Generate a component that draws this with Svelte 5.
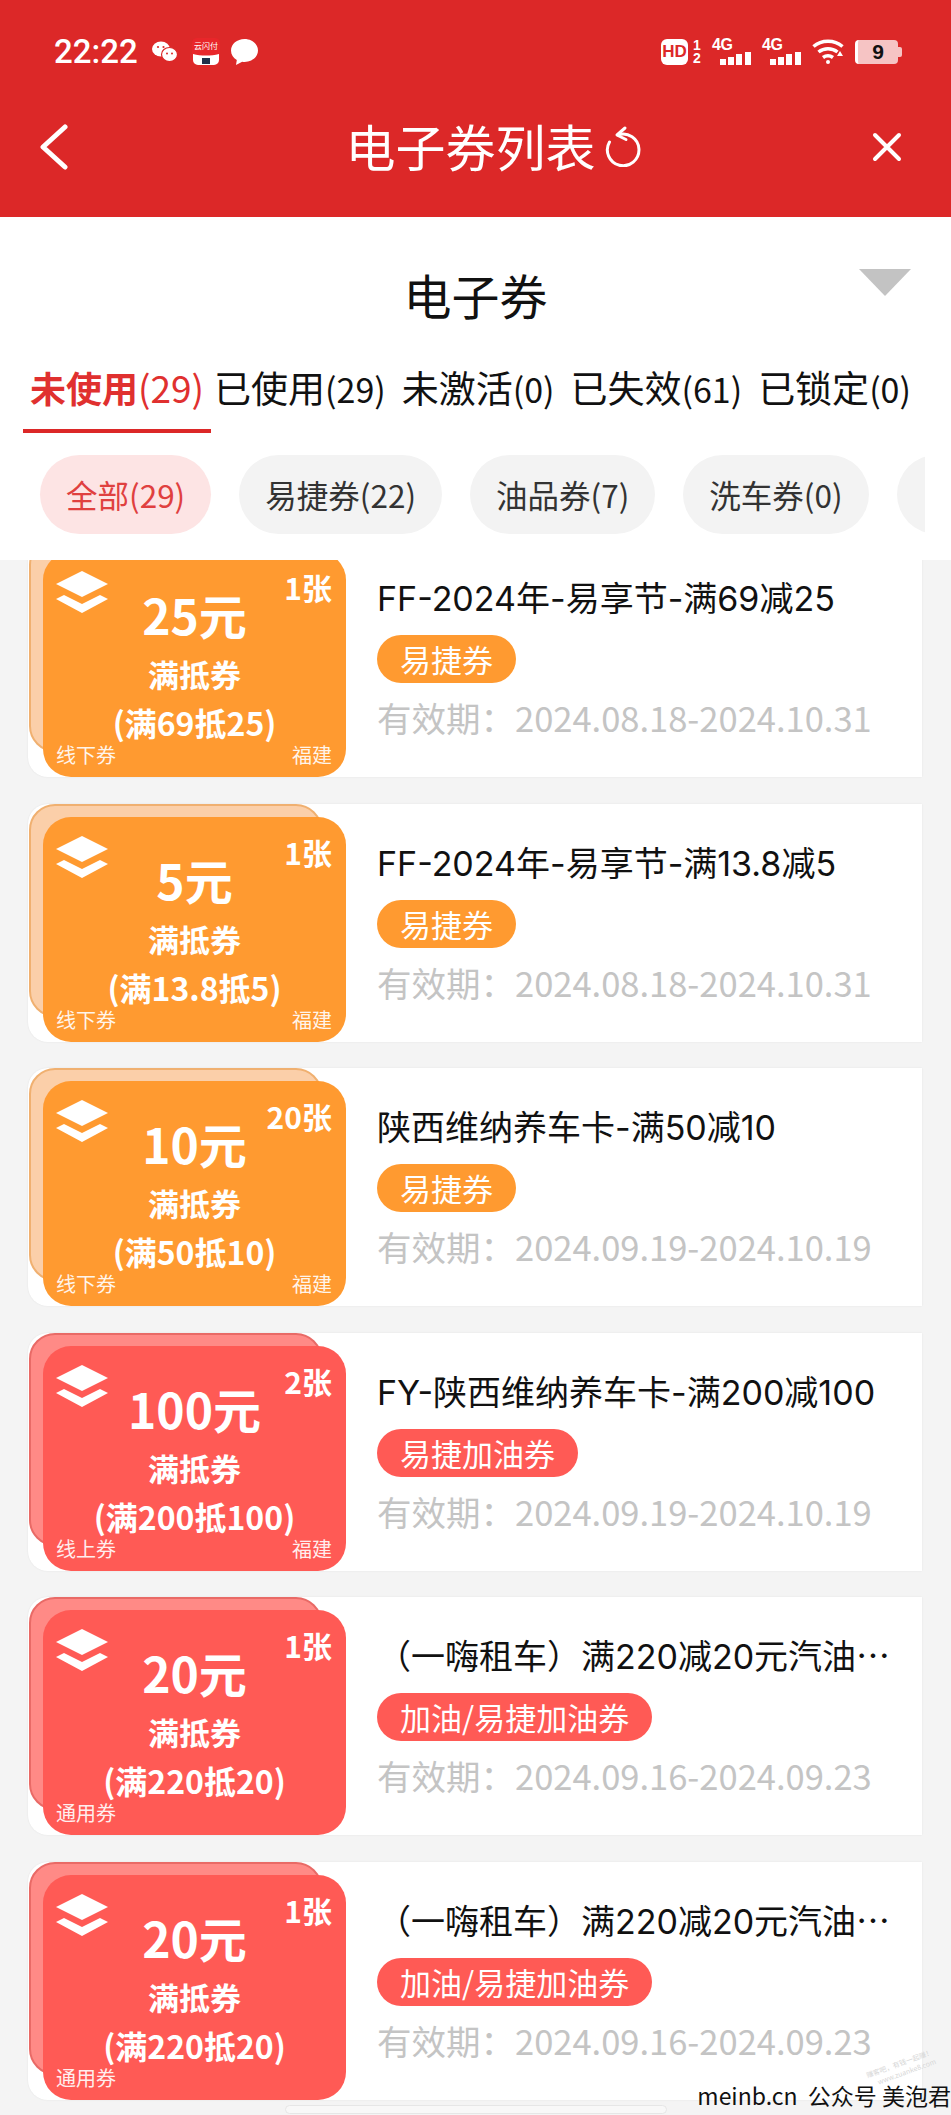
<script lang="ts">
	const tabs = [
		{ name: '未使用', count: 29, active: true },
		{ name: '已使用', count: 29 },
		{ name: '未激活', count: 0 },
		{ name: '已失效', count: 61 },
		{ name: '已锁定', count: 0 }
	];

	const chips = ['全部(29)', '易捷券(22)', '油品券(7)', '洗车券(0)', ''];

	const coupons = [
		{ tone: 'orange', amount: 25, qty: '1张', rule: '满69抵25', channel: '线下券', region: '福建', title: 'FF-2024年-易享节-满69减25', tag: '易捷券', date: '2024.08.18-2024.10.31' },
		{ tone: 'orange', amount: 5, qty: '1张', rule: '满13.8抵5', channel: '线下券', region: '福建', title: 'FF-2024年-易享节-满13.8减5', tag: '易捷券', date: '2024.08.18-2024.10.31' },
		{ tone: 'orange', amount: 10, qty: '20张', rule: '满50抵10', channel: '线下券', region: '福建', title: '陕西维纳养车卡-满50减10', tag: '易捷券', date: '2024.09.19-2024.10.19' },
		{ tone: 'red', amount: 100, qty: '2张', rule: '满200抵100', channel: '线上券', region: '福建', title: 'FY-陕西维纳养车卡-满200减100', tag: '易捷加油券', date: '2024.09.19-2024.10.19' },
		{ tone: 'red', amount: 20, qty: '1张', rule: '满220抵20', channel: '通用券', region: '', title: '（一嗨租车）满220减20元汽油⋯', tag: '加油/易捷加油券', date: '2024.09.16-2024.09.23' },
		{ tone: 'red', amount: 20, qty: '1张', rule: '满220抵20', channel: '通用券', region: '', title: '（一嗨租车）满220减20元汽油⋯', tag: '加油/易捷加油券', date: '2024.09.16-2024.09.23' }
	];
</script>

<div class="page">
	<header class="top">
		<div class="status">
			<div class="status-left">
				<span class="time">22:22</span>
				<svg class="ic-wechat" width="26" height="21" viewBox="0 0 26 21" aria-hidden="true">
					<ellipse cx="9" cy="8" rx="9" ry="7.500" fill="#fff" />
					<ellipse cx="17.500" cy="13.500" rx="8" ry="7" fill="#fff" stroke="#dc2828" stroke-width="1.200" />
					<circle cx="6" cy="6" r="1.100" fill="#dc2828" />
					<circle cx="11.500" cy="6" r="1.100" fill="#dc2828" />
					<circle cx="15" cy="12.500" r="1" fill="#dc2828" />
					<circle cx="20" cy="12.500" r="1" fill="#dc2828" />
				</svg>
				<svg class="ic-pay" width="28" height="27" viewBox="0 0 28 27" aria-hidden="true">
					<rect width="28" height="27" rx="5" fill="#e8262a" />
					<text x="14" y="11" text-anchor="middle" font-size="8" fill="#fff">云闪付</text>
					<path d="M1 16c8 2 18 2 26 0v6a5 5 0 0 1-5 5H6a5 5 0 0 1-5-5z" fill="#fff" />
					<rect x="10" y="20" width="8" height="6" fill="#20304a" />
				</svg>
				<svg class="ic-bubble" width="27" height="26" viewBox="0 0 27 26" aria-hidden="true">
					<path d="M13.500 0C6 0 0 5 0 11.500c0 4 2.300 7.400 5.800 9.500L5 26l6.200-3.300c.8.100 1.500.2 2.300.2C21 22.900 27 17.900 27 11.500S21 0 13.500 0z" fill="#fff" />
				</svg>
			</div>
			<div class="status-right">
				<span class="hd">HD</span>
				<span class="sims"><i>1</i><i>2</i></span>
				{#each [0, 1] as sim (sim)}
					<span class="signal">
						<b>4G</b>
						<svg width="31" height="13" viewBox="0 0 31 13" aria-hidden="true">
							<rect x="0" y="7" width="6" height="6" fill="#fff" />
							<rect x="8" y="5" width="6" height="8" fill="#fff" />
							<rect x="16" y="2" width="6" height="11" fill="#fff" />
							<rect x="25" y="0" width="6" height="13" fill="#fff" />
						</svg>
					</span>
				{/each}
				<svg class="ic-wifi" width="32" height="25" viewBox="0 0 32 25" fill="none" stroke="#fff" stroke-width="3.500" aria-hidden="true">
					<path d="M1.500 7.500c8-7 21-7 29 0" />
					<path d="M6.500 13c5.500-4.500 13.500-4.500 19 0" />
					<path d="M11 18.500c3-2.200 7-2.200 10 0" />
					<circle cx="16" cy="23" r="2" fill="#fff" stroke="none" />
					<path d="M25 17h6l-3-5z" fill="#fff" stroke="none" />
				</svg>
				<span class="battery"><span>9</span></span>
			</div>
		</div>
		<div class="navbar">
			<svg class="back" width="34" height="46" viewBox="0 0 34 46" fill="none" stroke="#fff" stroke-width="5" stroke-linecap="round" stroke-linejoin="round" aria-label="返回">
				<path d="M28 3 6 23l22 20" />
			</svg>
			<div class="nav-title">
				<span>电子券列表</span>
				<svg width="38" height="42" viewBox="0 0 38 42" fill="none" stroke="#fff" stroke-width="3" stroke-linecap="round" stroke-linejoin="round" aria-hidden="true">
					<path d="M14 10A15.800 15.800 0 1 1 5.500 17" />
					<path d="M21 3l-8 7 9 4.500" />
				</svg>
			</div>
			<svg class="close" width="30" height="30" viewBox="0 0 30 30" stroke="#fff" stroke-width="4" stroke-linecap="round" aria-label="关闭">
				<path d="M3 3l24 24M27 3 3 27" />
			</svg>
		</div>
	</header>

	<section class="filters">
		<div class="heading">
			<h1>电子券</h1>
			<span class="caret"></span>
		</div>
		<nav class="tabs">
			{#each tabs as tab (tab.name)}
				<span class="tab" class:active={tab.active}>{tab.name}<em>({tab.count})</em></span>
			{/each}
		</nav>
		<div class="chips">
			{#each chips as chip, i (i)}
				<span class="chip" class:on={i === 0} class:cut={chip === ''}>{chip}</span>
			{/each}
		</div>
	</section>

	<main class="list">
		{#each coupons as c, i (i)}
			<article class="card">
				<div class="stub {c.tone}">
					<div class="stub-back"></div>
					<div class="stub-front">
						<svg class="layers" width="52" height="42" viewBox="0 0 52 42" fill="#fff" aria-hidden="true">
							<path d="M26 0 52 13 26 26 0 13z" />
							<path d="M8 24l18 9 18-9 8 4-26 14L0 28z" />
						</svg>
						<span class="qty">{c.qty}</span>
						<strong class="amount">{c.amount}元</strong>
						<span class="kind">满抵券</span>
						<span class="rule">({c.rule})</span>
						<div class="foot">
							<span>{c.channel}</span>
							<span>{c.region}</span>
						</div>
					</div>
				</div>
				<div class="info">
					<h2>{c.title}</h2>
					<span class="tag {c.tone}">{c.tag}</span>
					<p>有效期：{c.date}</p>
				</div>
			</article>
		{/each}
	</main>

	<div class="scrollbar"></div>
	<div class="stamp"><span>赚客吧，有钱一起赚！</span><span>www.zuanke8.com</span></div>
	<div class="mark">meinb.cn&nbsp; 公众号 美泡君</div>
</div>

<style>
	:global(body) {
		margin: 0;
		background: #f4f4f4;
	}

	.page {
		position: relative;
		width: 951px;
		height: 2115px;
		overflow: hidden;
		background: #f4f4f4;
		color: #111;
		font-family: "Noto Sans CJK SC", "Noto Sans", sans-serif;
	}

	.top {
		height: 217px;
		background: #dc2828;
		color: #fff;
	}

	.status {
		display: flex;
		justify-content: space-between;
		align-items: center;
		height: 103px;
		padding: 0 53px 0 54px;
	}

	.status-left,
	.status-right {
		display: flex;
		align-items: center;
	}

	.time {
		font-family: Roboto, sans-serif;
		font-size: 33px;
		font-weight: 500;
		margin-right: 14px;
	}

	.ic-pay {
		margin: 0 11px 0 14px;
	}

	.hd {
		width: 27px;
		height: 26px;
		border-radius: 6px;
		background: #fff;
		color: #dc2828;
		font: 700 17px/26px "Liberation Sans", sans-serif;
		text-align: center;
	}

	.sims {
		display: flex;
		flex-direction: column;
		width: 12px;
		margin: 0 9px 0 3px;
		font: 700 14px/13px "Liberation Sans", sans-serif;
	}

	.sims i {
		font-style: normal;
		text-align: center;
	}

	.signal {
		display: flex;
		flex-direction: column;
		align-items: flex-start;
		margin-right: 11px;
	}

	.signal b {
		font: 700 16px/14px "Liberation Sans", sans-serif;
		letter-spacing: -0.5px;
	}

	.signal svg {
		display: block;
		margin-left: 8px;
	}

	.ic-wifi {
		margin-right: 11px;
	}

	.battery {
		position: relative;
		width: 43px;
		height: 24px;
		box-sizing: border-box;
		border-left: 3px solid #fff;
		border-radius: 4px;
		background: #f6c4c4;
		color: #111;
		font: 700 21px/24px "Liberation Sans", sans-serif;
		text-align: center;
	}

	.battery::after {
		content: "";
		position: absolute;
		right: -4px;
		top: 7px;
		width: 4px;
		height: 10px;
		border-radius: 0 2px 2px 0;
		background: #f6c4c4;
	}

	.navbar {
		display: flex;
		align-items: center;
		justify-content: space-between;
		height: 88px;
		padding: 0 49px 0 37px;
	}

	.nav-title {
		display: flex;
		align-items: center;
		gap: 8px;
		margin-left: 44px;
		padding-bottom: 2px;
		font-size: 50px;
		font-weight: 400;
		line-height: 1;
	}

	.nav-title span {
		margin-bottom: 2px;
	}

	.filters {
		height: 343px;
		background: #fff;
	}

	.heading {
		position: relative;
		height: 54px;
		padding-top: 50px;
		text-align: center;
	}

	.heading h1 {
		margin: 0;
		font-size: 48px;
		font-weight: 400;
		line-height: 54px;
	}

	.caret {
		position: absolute;
		top: 52px;
		right: 40px;
		width: 0;
		height: 0;
		border-left: 26px solid transparent;
		border-right: 26px solid transparent;
		border-top: 27px solid #c3c3c3;
	}

	.tabs {
		display: flex;
		justify-content: space-between;
		margin-top: 42px;
		padding: 0 40px 0 30px;
	}

	.tab {
		position: relative;
		font-size: 37px;
		line-height: 48px;
		white-space: nowrap;
	}

	.tab em {
		font-style: normal;
		font-size: 34px;
	}

	.tab.active {
		margin-right: -6px;
		color: #e0302f;
		font-size: 36px;
		font-weight: 700;
	}

	.tab.active em {
		font-size: 37px;
		font-weight: 400;
	}

	.tab.active::after {
		content: "";
		position: absolute;
		left: -7px;
		right: -7px;
		bottom: -20px;
		height: 4px;
		background: #dc2828;
	}

	.chips {
		display: flex;
		gap: 28px;
		width: 885px;
		margin-top: 42px;
		padding-left: 40px;
		overflow: hidden;
	}

	.chip {
		flex: none;
		height: 79px;
		padding: 0 26px;
		border-radius: 40px;
		background: #f3f3f3;
		color: #333;
		font-size: 31.500px;
		line-height: 79px;
	}

	.chip.on {
		background: #fde4e4;
		color: #e0403f;
	}

	.chip.cut {
		width: 30px;
	}

	.list {
		display: flex;
		flex-direction: column;
		gap: 26.500px;
		height: 1555px;
		padding: 0 29px 0 28px;
		overflow: hidden;
	}

	.card {
		flex: none;
		display: flex;
		height: 238px;
		background: #fff;
		border-radius: 20px 0 0 20px;
		box-shadow: 0 0 2px rgba(0, 0, 0, 0.08);
	}

	.card:first-child {
		margin-top: -21px;
	}

	.stub {
		position: relative;
		flex: none;
		width: 318px;
		height: 238px;
	}

	.stub-back {
		position: absolute;
		left: 1px;
		top: 0;
		width: 293px;
		height: 213px;
		box-sizing: border-box;
		border-radius: 26px;
		border: 2px solid;
	}

	.stub-front {
		position: absolute;
		left: 15px;
		top: 13px;
		width: 303px;
		height: 225px;
		display: flex;
		flex-direction: column;
		align-items: center;
		border-radius: 28px;
		color: #fff;
	}

	.orange .stub-back {
		background: #fbcfa9;
		border-color: #f0b070;
	}

	.orange .stub-front,
	.tag.orange {
		background: #ff9a30;
	}

	.red .stub-back {
		background: #ff8a86;
		border-color: #e96a66;
	}

	.red .stub-front,
	.tag.red {
		background: #ff5a55;
	}

	.layers {
		position: absolute;
		left: 13px;
		top: 19px;
	}

	.qty {
		position: absolute;
		right: 14px;
		top: 15px;
		font-size: 30px;
		font-weight: 700;
		line-height: 40px;
	}

	.amount {
		margin-top: 33px;
		font-size: 48px;
		font-weight: 700;
		line-height: 58px;
	}

	.kind {
		margin-top: 11px;
		font-size: 31px;
		font-weight: 700;
		line-height: 40px;
	}

	.rule {
		margin-top: 9px;
		font-size: 32px;
		font-weight: 700;
		line-height: 38px;
		white-space: nowrap;
	}

	.foot {
		position: absolute;
		left: 13px;
		right: 14px;
		bottom: 11px;
		display: flex;
		justify-content: space-between;
		font-size: 20px;
		line-height: 22px;
		opacity: 0.9;
	}

	.info {
		flex: 1;
		min-width: 0;
		padding: 37px 30px 0 31px;
	}

	.info h2 {
		margin: 0;
		font-family: Inter, "Noto Sans CJK SC", sans-serif;
		font-size: 34px;
		font-weight: 400;
		line-height: 46px;
		color: #111;
		white-space: nowrap;
	}

	.tag {
		display: inline-block;
		margin-top: 13px;
		padding: 0 23px;
		height: 48px;
		border-radius: 24px;
		color: #fff;
		font-size: 31px;
		line-height: 48px;
	}

	.info p {
		margin: 11px 0 0;
		font-size: 34.500px;
		line-height: 46px;
		color: #c4c4c4;
		white-space: nowrap;
	}

	.scrollbar {
		position: absolute;
		left: 285px;
		bottom: 1px;
		width: 382px;
		height: 9px;
		box-sizing: border-box;
		border: 1px solid #e6e6e6;
		border-radius: 5px;
		background: #f8f8f8;
	}

	.stamp {
		position: absolute;
		left: 866px;
		top: 2058px;
		display: flex;
		flex-direction: column;
		align-items: flex-end;
		width: 70px;
		color: #d6d6d6;
		font-size: 7px;
		line-height: 10px;
		white-space: nowrap;
		transform: rotate(-20deg);
	}

	.mark {
		position: absolute;
		right: 0;
		bottom: 2px;
		font-size: 23px;
		line-height: 36px;
		color: #111;
		white-space: nowrap;
	}
</style>
